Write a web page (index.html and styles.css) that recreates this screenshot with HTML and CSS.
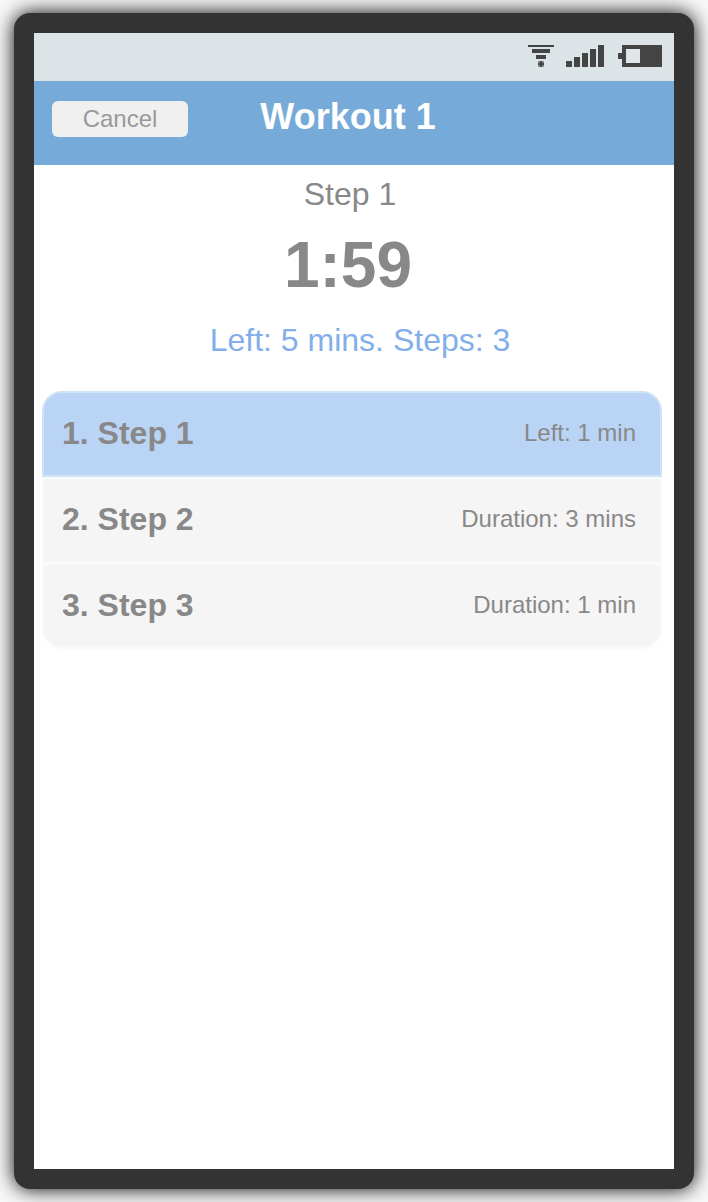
FILE: index.html
```html
<!DOCTYPE html>
<html lang="en">
<head>
<meta charset="utf-8">
<meta name="viewport" content="width=device-width, initial-scale=1">
<title>Workout 1</title>
<link rel="stylesheet" href="styles.css">
</head>
<body>
<div class="device">
  <div class="status-bar">
    <svg class="status-icons" width="134" height="22" viewBox="0 0 134 22" shape-rendering="crispEdges" role="img" aria-label="Wi-Fi, signal and battery">
      <path d="M0 0h26v2H0zM4 4h18v4H4zM8 10h10v4H8z"/>
      <path class="dot-soft" d="M10 16h6v6h-6z"/>
      <path d="M12 16h2v2h2v2h-2v2h-2v-2h-2v-2h2z"/>
      <path d="M38 16h6v6h-6zM46 12h6v10h-6zM54 8h6v14h-6zM62 4h6v18h-6zM70 0h6v22h-6z"/>
      <path d="M90 8h4V0h40v22H94v-8h-4z"/>
      <path class="battery-empty" d="M98 4h14v14H98z"/>
    </svg>
  </div>
  <header class="header">
    <button class="cancel" type="button">Cancel</button>
    <h1 class="title">Workout 1</h1>
  </header>
  <main>
    <section class="timer">
      <p class="current">Step 1</p>
      <p class="clock">1:59</p>
      <p class="summary">Left: 5 mins. Steps: 3</p>
    </section>
    <ol class="steps">
      <li class="step step-active"><span class="name">1. Step 1</span><span class="time">Left: 1 min</span></li>
      <li class="step"><span class="name">2. Step 2</span><span class="time">Duration: 3 mins</span></li>
      <li class="step"><span class="name">3. Step 3</span><span class="time">Duration: 1 min</span></li>
    </ol>
  </main>
</div>
</body>
</html>
```
FILE: styles.css
```css
* { box-sizing: border-box; margin: 0; padding: 0; }

body {
  display: flex;
  min-height: 100vh;
  padding: 13px 14px;
  background: #f8f8f8;
  color: #888;
  font-family: "Liberation Sans", Arial, Helvetica, sans-serif;
}

.device {
  flex: 1;
  border: 20px solid #333;
  border-radius: 16px;
  background: #fff;
  box-shadow: 0 0 20px #000;
}

.status-bar {
  display: flex;
  justify-content: flex-end;
  padding: 12px 12px 14px;
  background: #dce4e7;
}

.status-icons { display: block; fill: #444; }
.dot-soft { fill: #888b8c; }
.battery-empty { fill: #e1e7e9; }

.header {
  display: grid;
  grid-template-columns: 136px 1fr 136px;
  align-items: center;
  padding: 16px 30px 24px 18px;
  background: #75aad9;
}

.cancel {
  height: 36px;
  border: 0;
  border-radius: 6px;
  background: #f0f0f0;
  color: #999;
  font-family: inherit;
  font-size: 24px;
}

.title {
  padding-bottom: 4px;
  color: #fff;
  font-size: 36px;
  line-height: 40px;
  text-align: center;
}

.timer { padding: 8px 0 26px; text-align: center; }
.current { padding-right: 8px; font-size: 32px; line-height: 42px; }
.clock { padding-right: 12px; font-size: 64px; font-weight: bold; line-height: 100px; }
.summary { padding-left: 12px; color: #82aeea; font-size: 32px; line-height: 50px; }

.steps {
  padding: 0 12px 0 8px;
  list-style: none;
}

.step {
  display: flex;
  align-items: center;
  justify-content: space-between;
  height: 86px;
  padding: 0 24px 2px 18px;
  border: 2px solid #fafafa;
  background: #f5f5f5;
}

.step-active { border-color: #cfe2f8; background: #bad4f5; }
.step:first-child { border-radius: 20px 20px 0 0; }
.step:last-child { border-radius: 0 0 20px 20px; }
.name { font-size: 32px; font-weight: bold; }
.time { font-size: 24px; }
```
